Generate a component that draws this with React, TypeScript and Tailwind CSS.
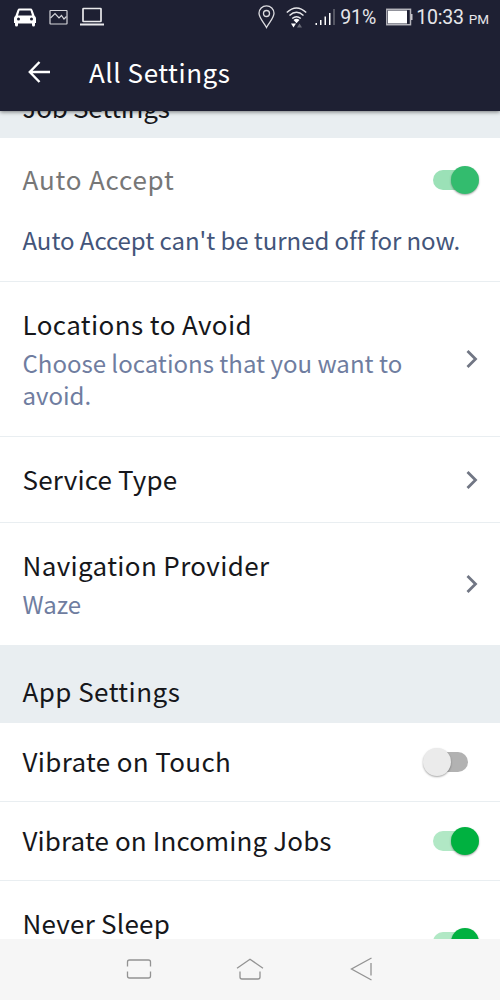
import React, { useState } from "react";
import clsx from "clsx";

const Title: React.FC<{ children: React.ReactNode; className?: string }> = ({ children, className = "text-[#16171b] tracking-[0.35px]" }) => (
  <div className={clsx("pb-0.5 text-[26px] leading-8 whitespace-nowrap", className)}>{children}</div>
);

const Section: React.FC<{ title: string; className?: string }> = ({ title, className }) => (
  <div className={clsx("h-[78px] shrink-0 bg-[#e9eef1] px-[22.5px]", className)}>
    <Title className="text-[#16171b]">{title}</Title>
  </div>
);

const Toggle: React.FC<{ label: string; defaultOn?: boolean; disabled?: boolean }> = ({ label, defaultOn = false, disabled }) => {
  const [on, setOn] = useState(defaultOn);

  return (
    <button
      role="switch"
      aria-checked={on}
      aria-label={label}
      disabled={disabled}
      onClick={() => setOn(!on)}
      className={clsx(
        "mr-8 flex h-5 w-[35px] shrink-0 items-center rounded-full",
        on ? "justify-end" : "justify-start",
        on ? (disabled ? "bg-[#9be1b7]" : "bg-[#b1e8c5]") : "bg-[#b2b2b2]"
      )}
    >
      <span
        className={clsx(
          "size-7 shrink-0 rounded-full shadow-[0_1px_2px_rgba(0,0,0,0.35)]",
          on ? (disabled ? "-mr-[10.5px] bg-[#33bc6e]" : "-mr-[10.5px] bg-[#00b140]") : "-ml-[10px] bg-[#ebebeb]"
        )}
      />
    </button>
  );
};

const Chevron = () => (
  <svg className="mr-[21px] shrink-0" width="14" height="20" viewBox="0 0 14 20" fill="none" stroke="#717684" strokeWidth="2.8">
    <path d="M2.5 2 L10.5 10 L2.5 18" />
  </svg>
);

const LinkRow: React.FC<{ title: string; titleClass: string; subtitle?: string; className: string }> = ({ title, titleClass, subtitle, className }) => (
  <div className={clsx("flex shrink-0 items-center justify-between pl-[22.5px]", className)}>
    <div className={clsx(subtitle && "pt-px")}>
      <Title className={titleClass}>{title}</Title>
      {subtitle && <p className="mt-[5px] w-[400px] text-2xl leading-8 text-[#6f7da0]">{subtitle}</p>}
    </div>
    <Chevron />
  </div>
);

const StatusBar = () => (
  <div className="flex h-[35px] items-center justify-between pr-[11px] pl-[14px] font-[Roboto,sans-serif] text-[#e6e6ea]">
    <div className="flex items-center">
      <svg className="-mt-px" width="22" height="19" viewBox="0 0 22 19" fill="#fff">
        <path
          fillRule="evenodd"
          d="M5.500 0.500h11q1.500 0 2 1.400L20.700 8q1.300.8 1.300 2.500V15h-1v2q0 1.500-1.500 1.500T18 17v-1.500H4V17q0 1.500-1.500 1.500T1 17v-2H0v-4.500Q0 8.800 1.300 8L3.500 1.900q.5-1.400 2-1.400ZM5.500 2.500 4 7.500h14l-1.500-5ZM4.500 9.600a1.500 1.500 0 1 0 0 3 1.500 1.500 0 0 0 0-3ZM17.500 9.600a1.500 1.500 0 1 0 0 3 1.500 1.500 0 0 0 0-3Z"
        />
      </svg>
      <svg className="-mt-px ml-[13px]" width="19" height="16" viewBox="0 0 19 16" fill="none" stroke="#d5d5da" strokeWidth="1.2">
        <rect x="1" y="1.500" width="17" height="13.500" rx="0.500" />
        <path d="M1.500 9 6 4.500l4 4.500 2.500-2.500 2.500 3.500 2.500-2.500" />
      </svg>
      <svg className="-mt-0.5 ml-3" width="24" height="19" viewBox="0 0 24 19" fill="none" stroke="#e9e9ec" strokeWidth="1.7">
        <rect x="3" y="1.500" width="18" height="13" rx="0.500" />
        <path d="M0 17.500h24" strokeWidth="2" />
      </svg>
    </div>
    <div className="flex items-center">
      <svg className="-mt-0.5" width="17" height="24" viewBox="0 0 17 24" fill="none" stroke="#dcdce0" strokeWidth="1.3">
        <path d="M8.500 22.500C6 17.500 1 13 1 8.300a7.500 7.500 0 0 1 15 0c0 4.700-5 9.200-7.500 14.200Z" />
        <circle cx="8.500" cy="8.500" r="3" />
      </svg>
      <svg className="-mt-0.5 ml-[11px]" width="21" height="22" viewBox="0 0 21 22" fill="none" stroke="#e6e6ea" strokeWidth="1.5">
        <path d="M0.800 6.500q9.700-9 19.400 0M3.500 9.500q7-6.400 14 0M6.200 12.500q4.300-3.600 8.600 0" />
        <path d="M7.500 14q3-2.400 6 0l-3 3.200ZM5 17.500h5l-2.500 4Z" fill="#fff" stroke="none" />
        <path d="m11 21.500 2.500-4 2.500 4Z" fill="#696a76" stroke="none" />
      </svg>
      <svg className="-mt-0.5 ml-2" width="21" height="18" viewBox="0 0 21 18" fill="#fff">
        <path d="M0.500 15h1.500v2H.5zM5 12h1.500v5H5zM9.500 8.500h1.500V17H9.500zM14 5h1.500v12H14z" />
        <path d="M18 1h2v16h-2z" fill="#545663" />
      </svg>
      <span className="ml-1 w-[37px] text-[19.5px] whitespace-nowrap">91%</span>
      <svg className="-mt-0.5 ml-[9px]" width="27" height="18" viewBox="0 0 27 18">
        <rect x="0.800" y="1.300" width="23.700" height="15.400" fill="none" stroke="#b5b5bc" strokeWidth="1.500" />
        <path d="M2 2.500h19v13H2z" fill="#fff" />
        <path d="M25 6h1.500v6H25z" fill="#c8c8ce" />
      </svg>
      <span className="ml-[3px] text-[19.5px] tracking-[-0.2px] whitespace-nowrap">10:33</span>
      <span className="mt-1 ml-[5px] text-[13.5px]">PM</span>
    </div>
  </div>
);

const NavBar = () => (
  <nav className="flex h-[61px] shrink-0 items-center justify-center gap-[83px] bg-[#f6f6f6] pb-px">
    {/* recents */}
    <svg width="28" height="24" viewBox="0 0 28 24" fill="none" stroke="#939393" strokeWidth="1.3">
      <path d="M2.500 9.500V5q0-2 2-2h19q2 0 2 2v4.500M2.500 14.500V19q0 2 2 2h19q2 0 2-2v-4.500" />
    </svg>
    {/* home */}
    <svg width="28" height="24" viewBox="0 0 28 24" fill="none" stroke="#939393" strokeWidth="1.3">
      <path d="M1 11.200 14 2.300l13 8.900M4 14.500v5.500q0 2 2 2h16q2 0 2-2v-5.500" />
    </svg>
    {/* back */}
    <svg width="28" height="24" viewBox="0 0 28 24" fill="none" stroke="#939393" strokeWidth="1.3">
      <path d="M24.500 1 4.500 12l20 11M24 6v12.500" />
    </svg>
  </nav>
);

export default function App() {
  return (
    <div className="flex h-[1000px] w-[500px] flex-col overflow-hidden bg-white font-['Noto_Sans_CJK_SC',sans-serif]">
      <header className="z-10 h-[111px] shrink-0 bg-[#1e2033] shadow-[0_1px_4px_rgba(0,0,0,0.5)]">
        <StatusBar />
        <div className="flex h-[74px] items-center pl-7">
          <svg width="23" height="22" viewBox="0 0 23 22" fill="none" stroke="#fff" strokeWidth="2.4">
            <path d="M11.500 1 1.800 11l9.700 10M2 11h20" />
          </svg>
          <h1 className="ml-[38px] text-[26px] leading-8 tracking-[0.55px] whitespace-nowrap text-white">All Settings</h1>
        </div>
      </header>

      <main className="flex min-h-0 flex-1 flex-col overflow-hidden">
        <Section title="Job Settings" className="-mt-[51px] pt-[31px] tracking-[-0.25px]" />
        <div className="h-36 shrink-0 border-b border-[#e9eef1] pt-[25px] pl-[22.5px]">
          <div className="flex items-center justify-between">
            <Title className="tracking-[0.8px] text-[#777]">Auto Accept</Title>
            <Toggle label="Auto Accept" defaultOn disabled />
          </div>
          <p className="mt-[27px] text-2xl leading-8 tracking-[-0.05px] whitespace-nowrap text-[#43557a]">Auto Accept can't be turned off for now.</p>
        </div>
        <LinkRow
          title="Locations to Avoid"
          titleClass="tracking-[0.4px] text-[#16171b]"
          subtitle="Choose locations that you want to avoid."
          className="h-[155px] border-b border-[#e9eef1]"
        />
        <LinkRow title="Service Type" titleClass="tracking-[0.15px] text-[#16171b]" className="h-[86px] border-b border-[#e9eef1]" />
        <LinkRow
          title="Navigation Provider"
          titleClass="tracking-[0.35px] text-[#16171b]"
          subtitle="Waze"
          className="h-[122px]"
        />

        <Section title="App Settings" className="pt-[30px] tracking-[0.45px]" />
        <div className="flex h-[79px] shrink-0 items-center justify-between border-b border-[#e9eef1] pl-[22.5px]">
          <Title>Vibrate on Touch</Title>
          <Toggle label="Vibrate on Touch" />
        </div>
        <div className="flex h-[79px] shrink-0 items-center justify-between border-b border-[#e9eef1] pl-[22.5px]">
          <Title className="tracking-[0.12px] text-[#16171b]">Vibrate on Incoming Jobs</Title>
          <Toggle label="Vibrate on Incoming Jobs" defaultOn />
        </div>
        <div className="flex h-[122px] shrink-0 justify-between pt-[26px] pl-[22.5px]">
          <Title className="tracking-[0.25px] text-[#16171b]">Never Sleep</Title>
          <div className="mt-[25px]">
            <Toggle label="Never Sleep" defaultOn />
          </div>
        </div>
      </main>

      <NavBar />
    </div>
  );
}
